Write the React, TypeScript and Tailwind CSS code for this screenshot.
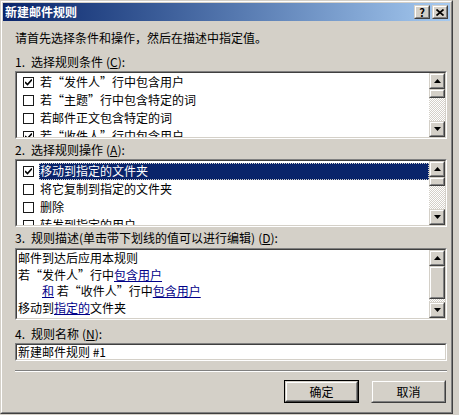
import React from 'react';

const font = { fontFamily: '"Noto Sans CJK SC", "Liberation Sans", sans-serif' };

const Sunken = ({ className = '', children }: { className?: string; children?: React.ReactNode }) => (
  <div className={`border border-t-[#808080] border-l-[#808080] border-b-white border-r-white ${className}`}>
    <div className="flex h-full border border-t-[#404040] border-l-[#404040] border-b-[#d4d0c8] border-r-[#d4d0c8] bg-white">
      {children}
    </div>
  </div>
);

const Raised = ({ className = '', children }: { className?: string; children?: React.ReactNode }) => (
  <div className={`border border-t-[#d4d0c8] border-l-[#d4d0c8] border-b-[#404040] border-r-[#404040] bg-[#d4d0c8] ${className}`}>
    <div className="flex h-full w-full items-center justify-center border border-t-white border-l-white border-b-[#808080] border-r-[#808080]">
      {children}
    </div>
  </div>
);

const Arrow = ({ up }: { up?: boolean }) => (
  <svg width="7" height="4" viewBox="0 0 7 4">
    <path d={up ? 'M3.5 0 L7 4 L0 4 Z' : 'M0 0 L7 0 L3.5 4 Z'} fill="#000" />
  </svg>
);

const ScrollBar = ({ thumb, track }: { thumb: number; track: number }) => (
  <div className="flex w-4 shrink-0 flex-col">
    <Raised className="h-4 w-4">
      <Arrow up />
    </Raised>
    <Raised className="w-4">
      <div style={{ height: thumb - 4 }} />
    </Raised>
    <div
      className="w-4 bg-[repeating-conic-gradient(#ffffff_0%_25%,#d4d0c8_0%_50%)] bg-[length:2px_2px]"
      style={{ height: track }}
    />
    <Raised className="h-4 w-4">
      <Arrow />
    </Raised>
  </div>
);

const Check = ({ on }: { on: boolean }) => (
  <div className="flex h-[11px] w-[11px] items-center justify-center border border-[#1a1a1a] bg-white">
    {on && (
      <svg width="7" height="7" viewBox="0 0 7 7">
        <path d="M0 3 L2.5 5.5 L7 0.5" stroke="#000" strokeWidth="1.6" fill="none" />
      </svg>
    )}
  </div>
);

const Row = ({ on, text, selected }: { on: boolean; text: string; selected?: boolean }) => (
  <div className="flex h-[18px] items-center">
    <div className="flex w-[22px] shrink-0 pl-[6px]">
      <Check on={on} />
    </div>
    <div
      className={
        selected
          ? 'flex h-[17px] flex-1 items-center bg-[#0a246a] px-[1px] text-white outline-1 outline-dotted outline-offset-[-1px] outline-[#d4d0c8]'
          : 'flex h-[17px] flex-1 items-center px-[1px] text-black'
      }
    >
      {text}
    </div>
  </div>
);

const Label = ({ num, text, k, className = '' }: { num: string; text: string; k: string; className?: string }) => (
  <div className={`h-4 leading-4 whitespace-nowrap ${className}`}>
    {num}
    <span className="ml-[6px]">{text}</span>
    <span className="ml-[3px]">
      (<span className="underline">{k}</span>):
    </span>
  </div>
);

const Link = ({ children }: { children: React.ReactNode }) => (
  <span className="text-[#000088] underline">{children}</span>
);

const conditions = [
  { on: true, text: '若“发件人”行中包含用户' },
  { on: false, text: '若“主题”行中包含特定的词' },
  { on: false, text: '若邮件正文包含特定的词' },
  { on: true, text: '若“收件人”行中包含用户' },
];

const actions = [
  { on: true, text: '移动到指定的文件夹', selected: true },
  { on: false, text: '将它复制到指定的文件夹' },
  { on: false, text: '删除' },
  { on: false, text: '转发到指定的用户' },
];

export default function App() {
  return (
    <div className="h-[415px] w-[459px] bg-[#d4d0c8] text-[12px] text-black" style={font}>
      <div className="h-[414px] w-[453px] border border-t-[#d4d0c8] border-l-[#d4d0c8] border-b-[#404040] border-r-[#404040]">
        <div className="flex h-full flex-col border border-t-white border-l-white border-b-[#808080] border-r-[#808080] p-px">
          <div className="flex h-[18px] shrink-0 items-center bg-gradient-to-r from-[#0a246a] to-[#a6caf0] pl-[2px] pr-[2px]">
            <span className="font-bold text-white">新建邮件规则</span>
            <div className="ml-auto flex gap-[2px]">
              <Raised className="h-[14px] w-4">
                <span className="text-[11px] font-bold leading-none">?</span>
              </Raised>
              <Raised className="h-[14px] w-4">
                <svg width="8" height="7" viewBox="0 0 8 7">
                  <path d="M0.5 0.5 L7.5 6.5 M7.5 0.5 L0.5 6.5" stroke="#000" strokeWidth="1.7" />
                </svg>
              </Raised>
            </div>
          </div>

          <div className="flex flex-1 flex-col pl-[12px] pr-[3px]">
            <div className="mt-[9px] h-4 leading-4">请首先选择条件和操作，然后在描述中指定值。</div>

            <Label num="1." text="选择规则条件" k="C" className="mt-2" />
            <Sunken className="mt-px h-[68px]">
              <div className="flex-1 overflow-hidden">
                {conditions.map((c) => (
                  <Row key={c.text} on={c.on} text={c.text} />
                ))}
              </div>
              <ScrollBar thumb={9} track={23} />
            </Sunken>

            <Label num="2." text="选择规则操作" k="A" className="mt-[3px]" />
            <Sunken className="mt-px h-[68px]">
              <div className="flex-1 overflow-hidden pt-px">
                {actions.map((a) => (
                  <Row key={a.text} on={a.on} text={a.text} selected={a.selected} />
                ))}
              </div>
              <ScrollBar thumb={9} track={23} />
            </Sunken>

            <Label num="3." text="规则描述(单击带下划线的值可以进行编辑)" k="D" className="mt-[3px]" />
            <Sunken className="mt-[2px] h-[72px]">
              <div className="flex-1 overflow-hidden pl-[1px] leading-[16.5px]">
                <div>邮件到达后应用本规则</div>
                <div>
                  若“发件人”行中<Link>包含用户</Link>
                </div>
                <div className="pl-[24px]">
                  <Link>和</Link> 若“收件人”行中<Link>包含用户</Link>
                </div>
                <div>
                  移动到<Link>指定的</Link>文件夹
                </div>
              </div>
              <ScrollBar thumb={33} track={3} />
            </Sunken>

            <Label num="4." text="规则名称" k="N" className="mt-[6px]" />
            <Sunken className="mt-px h-[18px]">
              <div className="flex flex-1 items-center pl-px leading-none">新建邮件规则 #1</div>
            </Sunken>

            <div className="mt-[9px] h-[2px] border-t border-b border-t-[#808080] border-b-white" />

            <div className="mt-2 flex justify-end gap-3 pr-px">
              <div className="h-[23px] w-[75px] border border-black">
                <Raised className="h-full w-full">
                  <span>确定</span>
                </Raised>
              </div>
              <Raised className="h-[23px] w-[75px]">
                <span>取消</span>
              </Raised>
            </div>
          </div>
        </div>
      </div>
    </div>
  );
}
